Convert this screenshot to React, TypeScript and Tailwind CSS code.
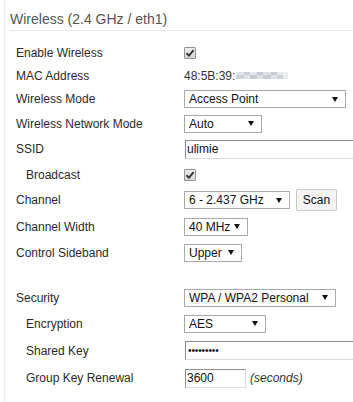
import React from "react";

function Arrow() {
  return (
    <svg width="6" height="5" viewBox="0 0 6 5" className="shrink-0">
      <polygon points="0,0 6,0 3,5" fill="#111" />
    </svg>
  );
}

function Select({ text, w }: { text: string; w: string }) {
  return (
    <div
      className={`${w} h-[18px] border border-[#a9a9a9] bg-white flex items-center justify-between pl-[4px] pr-[7px] leading-[16px] text-[12px] text-[#111]`}
    >
      <span className="whitespace-nowrap">{text}</span>
      <Arrow />
    </div>
  );
}

function Input({ w, children }: { w: string; children: React.ReactNode }) {
  return (
    <div
      className={`${w} ml-px h-[19px] border border-t-[#8c8c8c] border-l-[#8c8c8c] border-r-[#dadada] border-b-[#dadada] bg-white flex items-center pl-[1px] text-[12px] leading-[16px] text-[#111] shrink-0`}
    >
      {children}
    </div>
  );
}

function Check() {
  return (
    <div className="w-[12px] h-[12px] border border-[#949494] bg-gradient-to-b from-[#ececec] to-[#d6d6d6] flex items-center justify-center rounded-[1px]">
      <svg width="10" height="10" viewBox="0 0 10 10">
        <path d="M1.5 5.2 L4 7.6 L8.6 2.2" fill="none" stroke="#333" strokeWidth="1.9" />
      </svg>
    </div>
  );
}

function Row({
  label,
  indent,
  h,
  children,
}: {
  label: string;
  indent?: boolean;
  h: string;
  children?: React.ReactNode;
}) {
  return (
    <div className={`flex items-center ${h}`}>
      <div
        className={`w-[168px] shrink-0 text-[12px] leading-[14px] text-[#2a2a2a] whitespace-nowrap ${
          indent ? "pl-[10px]" : ""
        }`}
      >
        {label}
      </div>
      <div className="flex items-center">{children}</div>
    </div>
  );
}

export default function App() {
  return (
    <div
      className="w-[353px] h-[402px] overflow-hidden bg-white pl-[4px]"
      style={{ fontFamily: '"Liberation Sans", Arial, sans-serif' }}
    >
      <div className="h-full border-l border-[#ececec]">
        <div className="pl-[5px] pt-[9px] h-[30px] text-[14px] leading-[20px] text-[#555]">
          Wireless (2.4 GHz / eth1)
        </div>
        <div className="ml-[5px] h-px bg-[#e8e8e8]" />
        <div className="pl-[11px] pt-[11px]">
          <Row label="Enable Wireless" h="h-[22px]">
            <Check />
          </Row>
          <Row label="MAC Address" h="h-[23px]">
            <span className="text-[12px] leading-[14px] text-[#333]">48:5B:39:</span>
            <div className="flex flex-col ml-[1px]">
              <div className="flex h-[3px]">
                <span className="w-[8px] bg-[#e0e3ea]" />
                <span className="w-[6px] bg-[#c9cdd7]" />
                <span className="w-[7px] bg-[#e3e6ec]" />
                <span className="w-[6px] bg-[#c5cad4]" />
                <span className="w-[8px] bg-[#dcdfe6]" />
                <span className="w-[6px] bg-[#c8ccd6]" />
                <span className="w-[6px] bg-[#e4e7ec]" />
                <span className="w-[5px] bg-[#eef0f3]" />
              </div>
              <div className="flex h-[4px]">
                <span className="w-[8px] bg-[#cdd1da]" />
                <span className="w-[6px] bg-[#e0e3e9]" />
                <span className="w-[7px] bg-[#c6cad5]" />
                <span className="w-[6px] bg-[#dcdfe6]" />
                <span className="w-[8px] bg-[#c9cdd7]" />
                <span className="w-[6px] bg-[#dfe2e8]" />
                <span className="w-[6px] bg-[#cfd3db]" />
                <span className="w-[5px] bg-[#e9ebef]" />
              </div>
            </div>
          </Row>
          <Row label="Wireless Mode" h="h-[24px]">
            <Select text="Access Point" w="w-[162px]" />
          </Row>
          <Row label="Wireless Network Mode" h="h-[25px]">
            <Select text="Auto" w="w-[78px]" />
          </Row>
          <Row label="SSID" h="h-[26px]">
            <Input w="w-[200px]">ulimie</Input>
          </Row>
          <Row label="Broadcast" indent h="h-[25px]">
            <Check />
          </Row>
          <Row label="Channel" h="h-[26px]">
            <Select text="6 - 2.437 GHz" w="w-[106px]" />
            <div className="ml-[6px] w-[41px] h-[22px] border border-[#c8c8c8] rounded-[2px] bg-[#f4f4f4] flex items-center justify-center text-[12px] text-[#111]">
              Scan
            </div>
          </Row>
          <Row label="Channel Width" h="h-[27px]">
            <Select text="40 MHz" w="w-[64px]" />
          </Row>
          <Row label="Control Sideband" h="h-[25px]">
            <Select text="Upper" w="w-[58px]" />
          </Row>
          <div className="h-[20px]" />
          <Row label="Security" h="h-[25px]">
            <Select text="WPA / WPA2 Personal" w="w-[152px]" />
          </Row>
          <Row label="Encryption" indent h="h-[27px]">
            <Select text="AES" w="w-[82px]" />
          </Row>
          <Row label="Shared Key" indent h="h-[27px]">
            <Input w="w-[200px]">
              <span className="text-[10px] leading-[10px] tracking-[-0.1px] pl-[1px] text-[#111]">•••••••••</span>
            </Input>
          </Row>
          <Row label="Group Key Renewal" indent h="h-[28px]">
            <Input w="w-[61px]">3600</Input>
            <span className="ml-[4px] text-[12px] italic text-[#333]">(seconds)</span>
          </Row>
        </div>
      </div>
    </div>
  );
}
